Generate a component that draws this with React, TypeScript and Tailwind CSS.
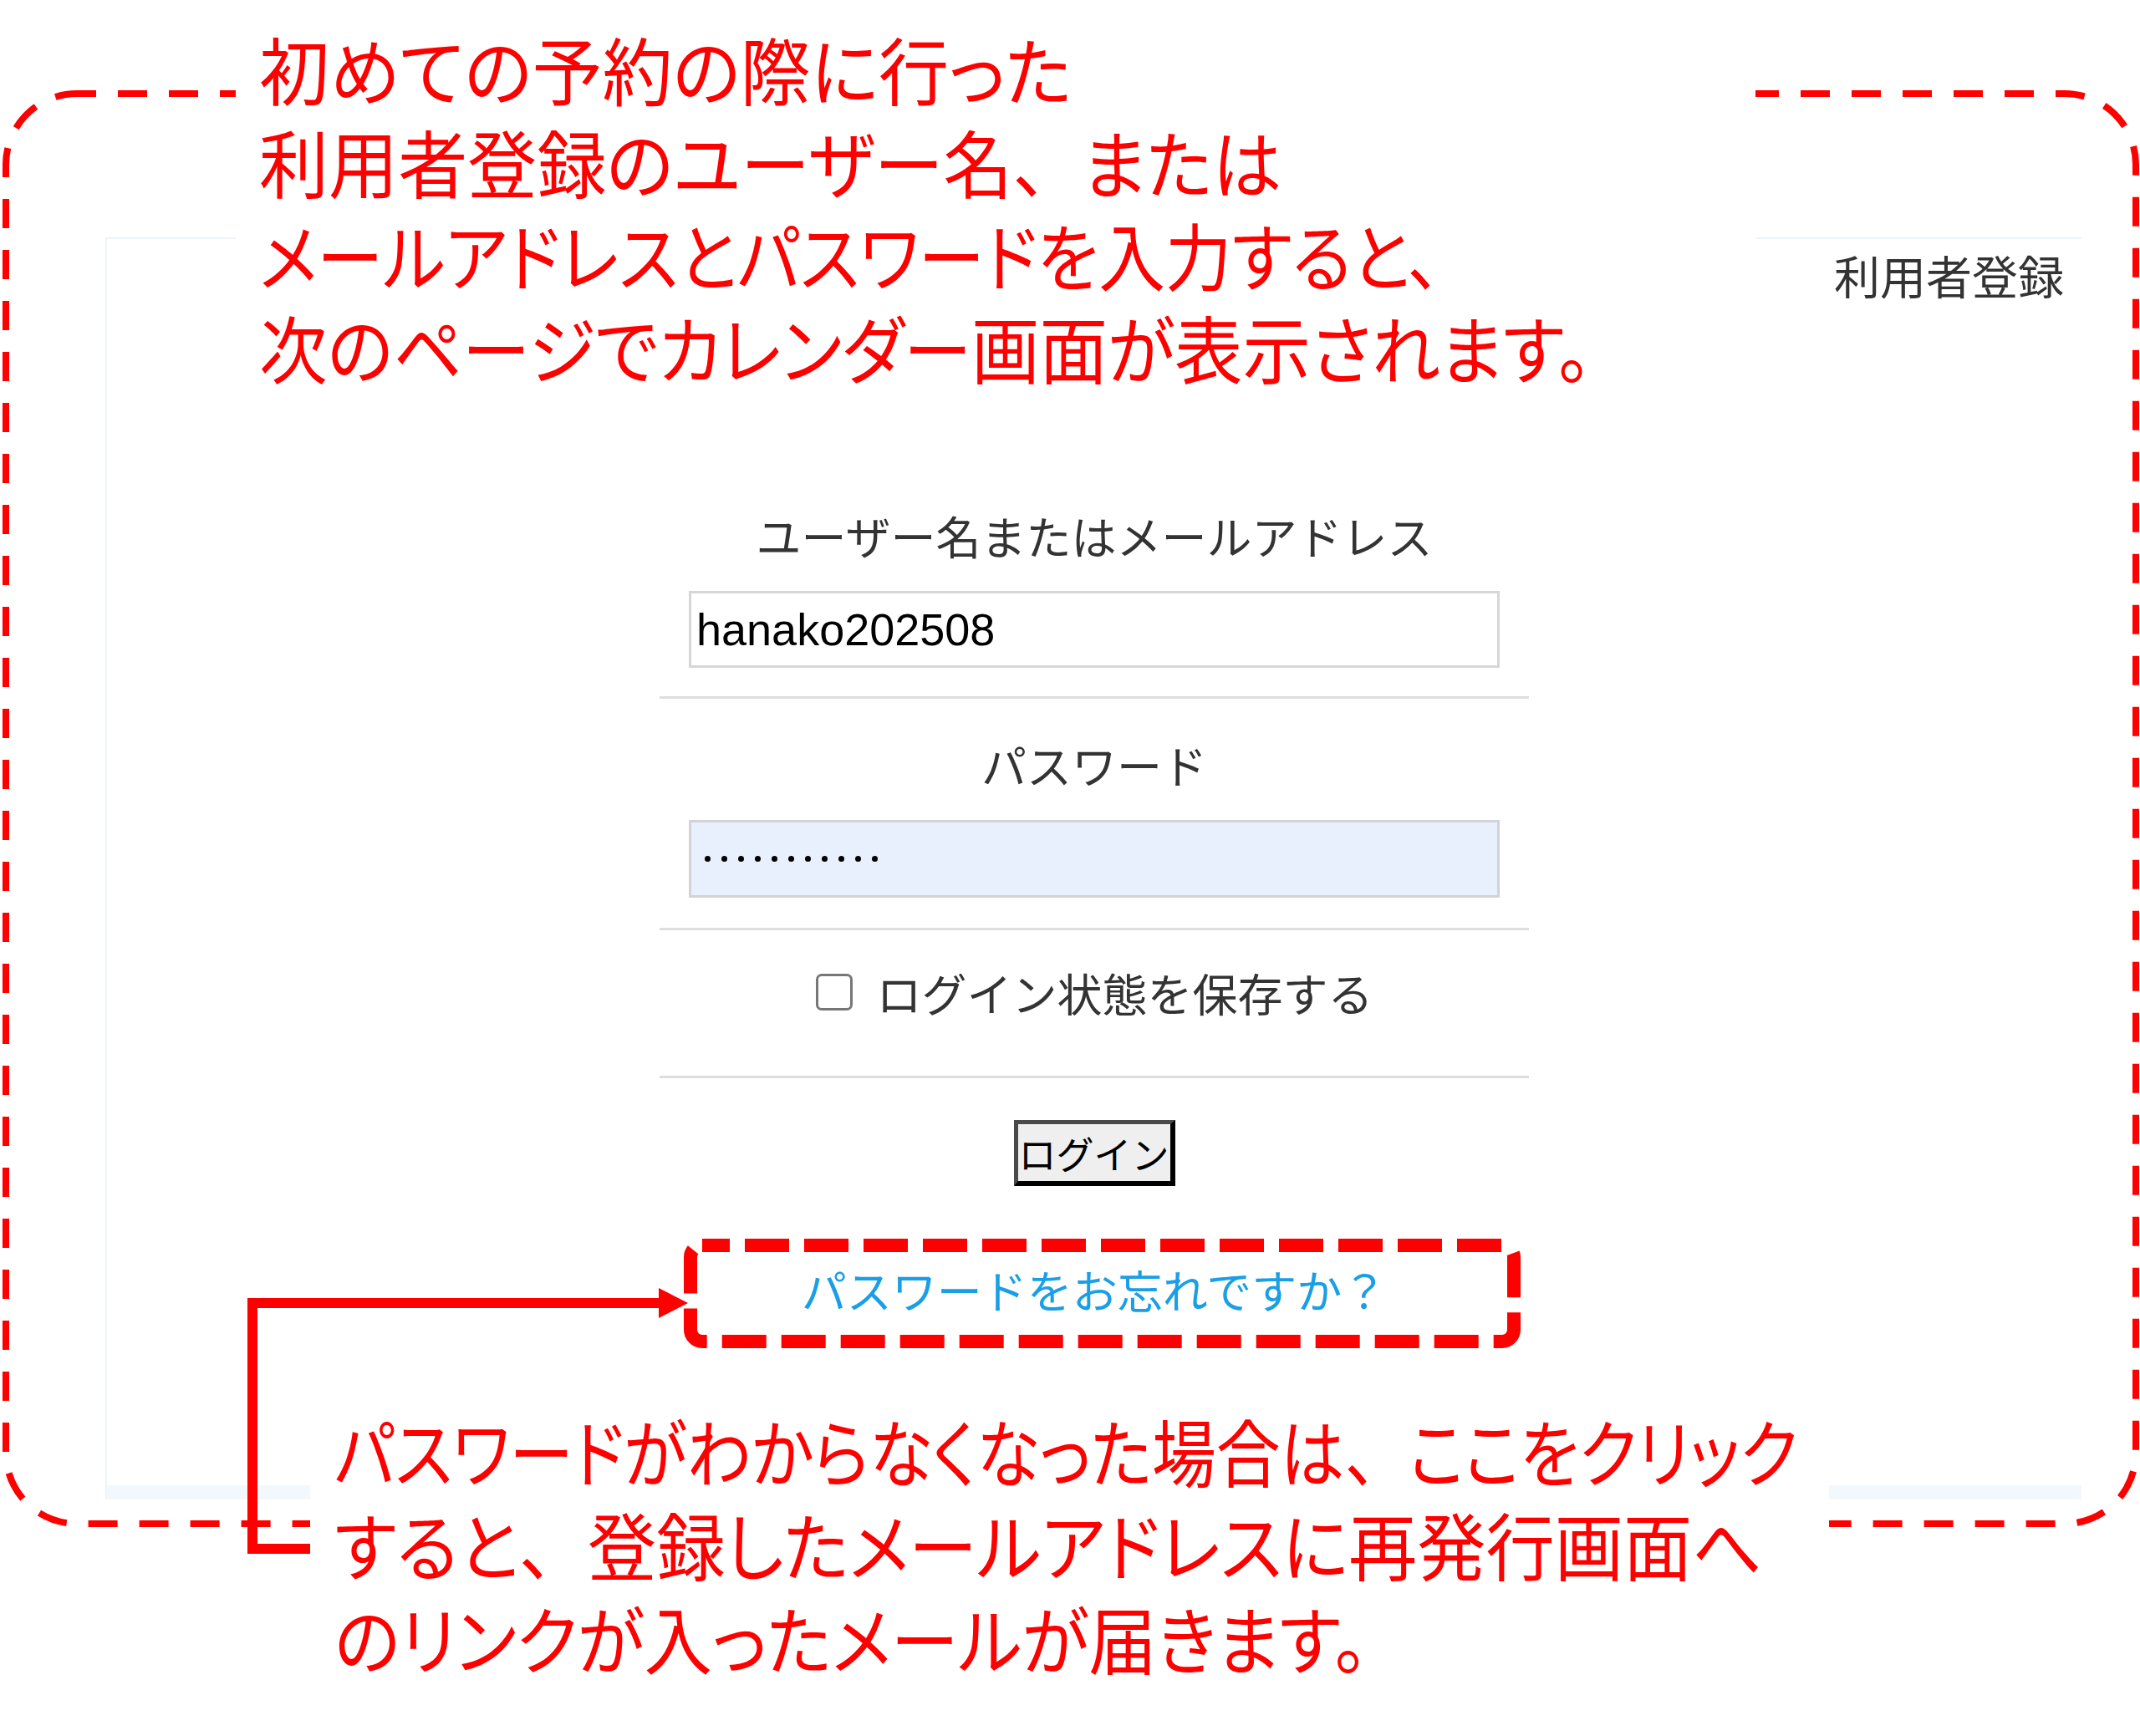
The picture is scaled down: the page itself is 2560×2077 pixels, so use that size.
const PASSWORD_LENGTH = 11;

function FieldLabel({ children, className = '' }: { children: string; className?: string }) {
  return (
    <div className={`flex h-[80px] items-center justify-center text-[54px] text-[#333] ${className}`}>{children}</div>
  );
}

function Divider({ className }: { className: string }) {
  return <div className={`h-[3px] bg-[#dedede] ${className}`} />;
}

// full-width comma inside proportional (palt) note text
function Comma() {
  return <span className="[font-feature-settings:normal]">、</span>;
}

function LoginPage() {
  return (
    <main className="flex h-[1510px] w-[2364px] flex-col border-l-2 border-t-2 border-[#edf3f9]">
      <header className="flex h-[84px] items-center justify-end pr-[21px] text-[55px] text-[#333]">利用者登録</header>

      <form className="mx-auto mt-[230px] flex w-[1040px] flex-col" onSubmit={(event) => event.preventDefault()}>
        <FieldLabel>ユーザー名またはメールアドレス</FieldLabel>
        <input
          type="text"
          readOnly
          value="hanako202508"
          aria-label="ユーザー名またはメールアドレス"
          className="mx-[35px] mt-[27px] h-[92px] border-[3px] border-[#d6d6d6] bg-white pl-[6px] font-['Liberation_Sans',sans-serif] text-[54px] text-black outline-none"
        />
        <Divider className="mt-[34px]" />

        <FieldLabel className="mt-[38px]">パスワード</FieldLabel>
        <div
          role="textbox"
          aria-label="パスワード"
          className="mx-[35px] mt-[27px] flex h-[93px] items-center gap-[13px] border-[3px] border-[#d3d3d3] bg-[#e8f0fe] pl-[16px]"
        >
          {Array.from({ length: PASSWORD_LENGTH }).map((_, index) => (
            <span key={index} className="h-[7px] w-[7px] rounded-full bg-black" />
          ))}
        </div>
        <Divider className="mt-[36px]" />

        <label className="mt-[34px] flex h-[80px] items-center justify-center gap-[29px] text-[54px] text-[#333]">
          <input
            type="checkbox"
            className="h-[44px] w-[44px] appearance-none rounded-[7px] border-[3px] border-[#777] bg-white"
          />
          <span>ログイン状態を保存する</span>
        </label>
        <Divider className="mt-[60px]" />

        <button
          type="submit"
          className="mt-[50px] flex h-[79px] w-[193px] items-center justify-center self-center whitespace-nowrap border-[5px] border-b-[6px] border-r-[6px] border-b-black border-l-[#4a4a4a] border-r-black border-t-[#4a4a4a] bg-[#efefef] px-0 text-[45px] leading-none text-black"
        >
          ログイン
        </button>

        <a href="#" className="mt-[83px] flex h-[80px] items-center justify-center text-[54px] text-[#1a9fe6]">
          パスワードをお忘れですか？
        </a>
      </form>

      <div className="mt-auto h-[17px] bg-[#f3f8fc]" />
    </main>
  );
}

export default function App() {
  return (
    <div className="relative h-[2077px] w-[2560px] overflow-hidden bg-white font-['Noto_Sans_CJK_JP',sans-serif]">
      <div className="pl-[126px] pt-[284px]">
        <LoginPage />
      </div>

      {/* outer dashed frame, partly hidden by the note boxes */}
      <svg className="pointer-events-none absolute left-0 top-0" width={2560} height={2077} viewBox="0 0 2560 2077">
        <rect
          x={7}
          y={112}
          width={2548}
          height={1711}
          rx={85}
          fill="none"
          stroke="#ff0000"
          strokeWidth={8}
          strokeDasharray="35 26"
          strokeDashoffset={12}
        />
      </svg>

      <div className="absolute left-[282px] top-[16px] w-[1818px] whitespace-nowrap bg-white pb-[24px] pl-[28px] pt-[9px] text-[88px] leading-[111px] text-[#ff0000] [font-feature-settings:'palt']">
        <span className="block origin-left scale-x-[0.956]">初めての予約の際に行った</span>
        <span className="block origin-left scale-x-[0.944]">
          利用者登録のユーザー名<Comma />または
        </span>
        <span className="block origin-left scale-x-[0.905]">メールアドレスとパスワードを入力すると、</span>
        <span className="block origin-left scale-x-[0.927]">次のページでカレンダー画面が表示されます。</span>
      </div>

      <div className="absolute left-[371px] top-[1660px] h-[417px] w-[1817px] whitespace-nowrap bg-white pl-[29px] pt-[18px] text-[88px] leading-[112px] text-[#ff0000] [font-feature-settings:'palt']">
        <span className="block origin-left scale-x-[0.873]">
          パスワードがわからなくなった場合は<Comma />ここをクリック
        </span>
        <span className="block origin-left scale-x-[0.935]">
          すると<Comma />登録したメールアドレスに再発行画面へ
        </span>
        <span className="block origin-left scale-x-[0.926]">のリンクが入ったメールが届きます。</span>
      </div>

      {/* callout around the forgot-password link */}
      <svg className="pointer-events-none absolute left-0 top-0" width={2560} height={2077} viewBox="0 0 2560 2077">
        <rect
          x={826}
          y={1490}
          width={985}
          height={115}
          rx={14}
          fill="none"
          stroke="#ff0000"
          strokeWidth={16}
          strokeDasharray="53 18"
          strokeDashoffset={20}
        />
        <path d="M371 1853H302V1559H792" fill="none" stroke="#ff0000" strokeWidth={12} />
        <polygon points="788,1541 823,1559 788,1577" fill="#ff0000" />
      </svg>
    </div>
  );
}
